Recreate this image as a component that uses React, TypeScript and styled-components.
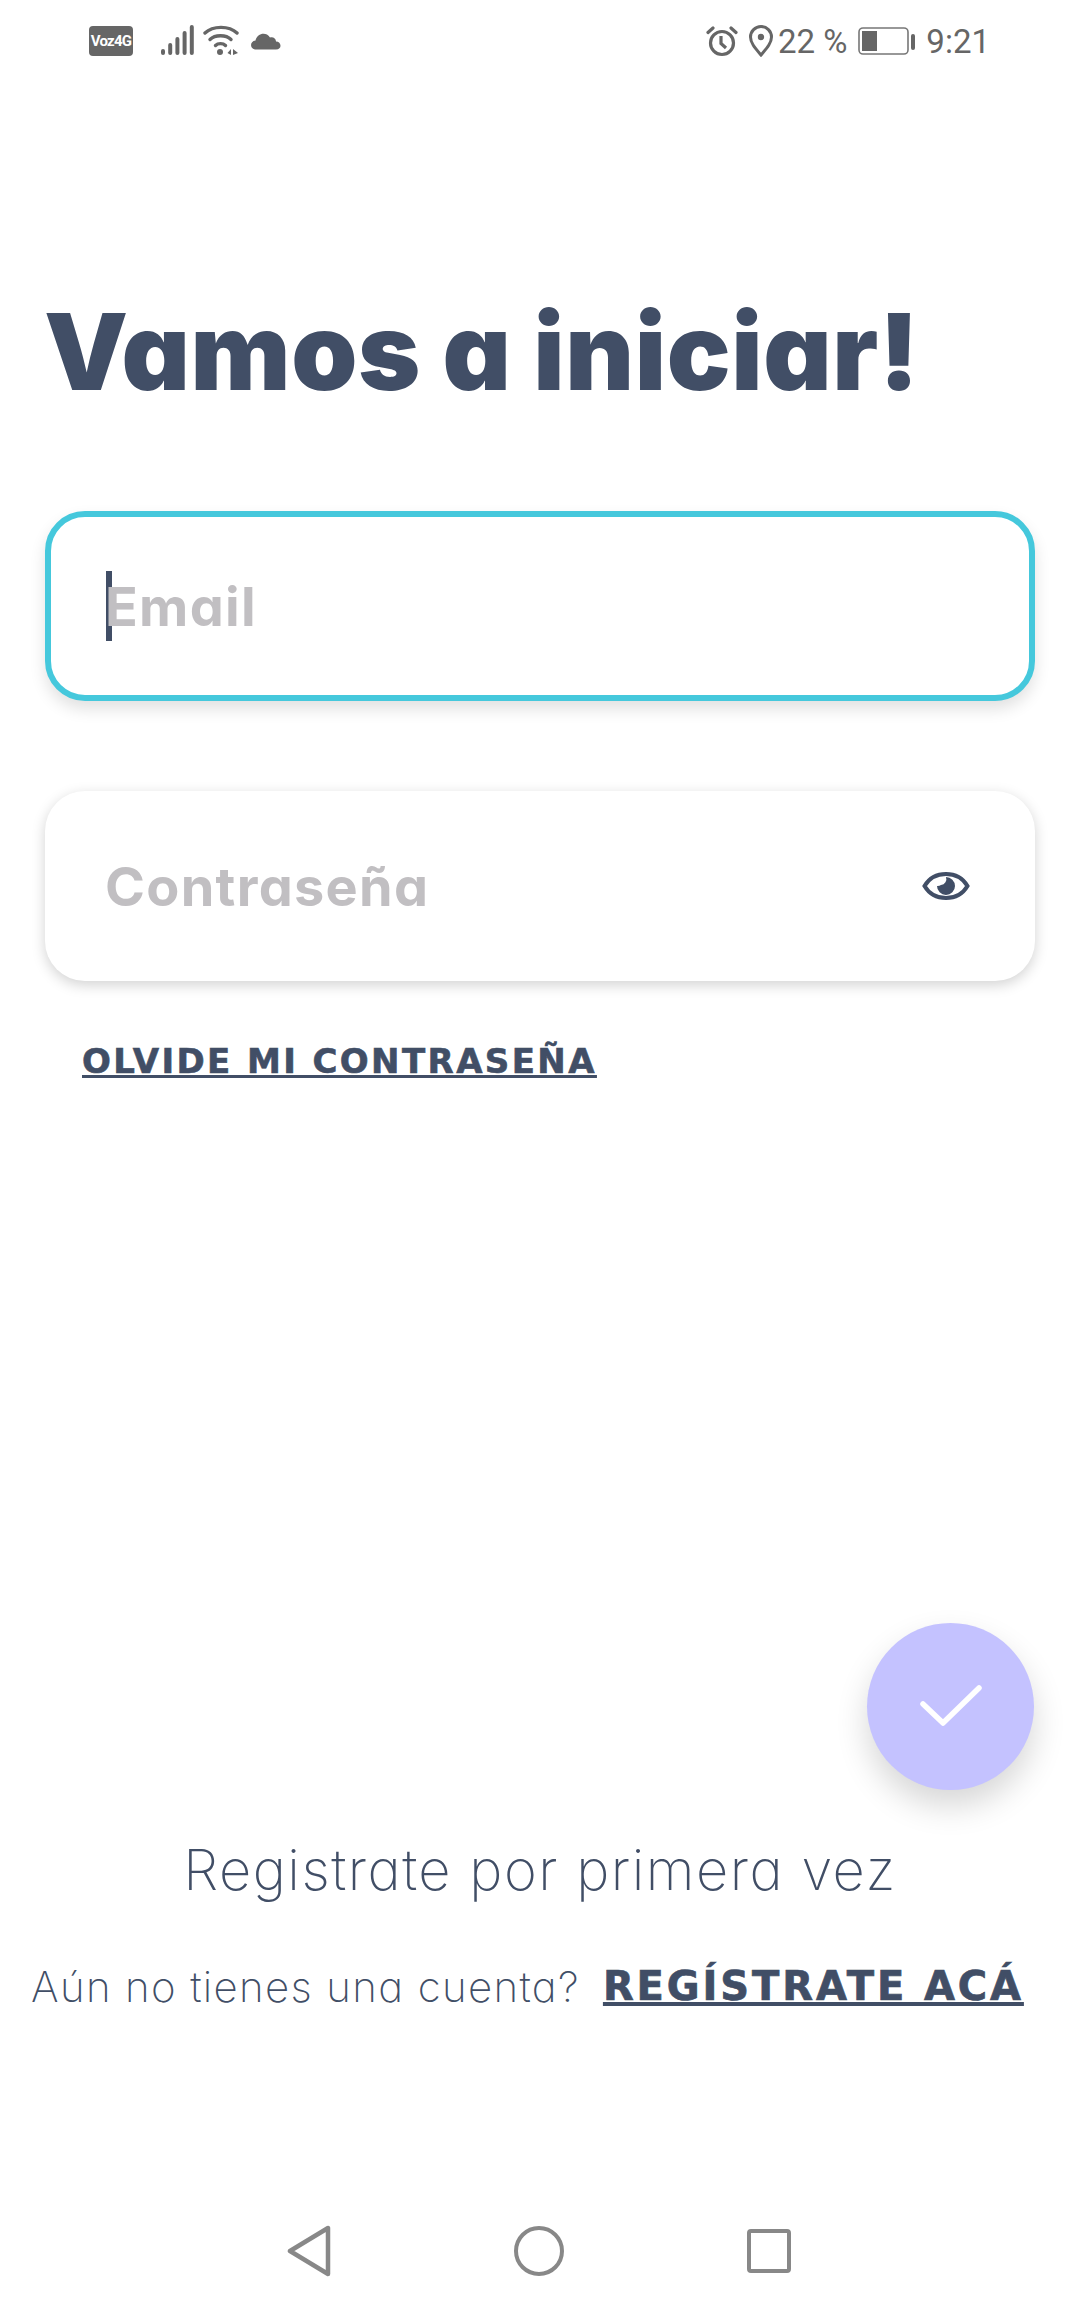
import React from 'react';
import styled, {createGlobalStyle} from "styled-components";

const GlobalStyle = createGlobalStyle`
  html, body {
    margin: 0;
    padding: 0;
    background: #ffffff;
  }
  * {
    box-sizing: border-box;
  }
`

const StatusLeft = () => (
    <StatusGroup>
        <VozBadge>Voz4G</VozBadge>
        <svg width="33" height="32" viewBox="0 0 33 32" style={{marginLeft: 28}}>
            <g fill="#666">
                <rect x="0" y="24" width="4" height="6" rx="2"/>
                <rect x="7.200" y="18" width="4" height="12" rx="2"/>
                <rect x="14.400" y="12" width="4" height="18" rx="2"/>
                <rect x="21.600" y="6" width="4" height="24" rx="2"/>
                <rect x="28.800" y="0" width="4" height="30" rx="2"/>
            </g>
        </svg>
        <svg width="37" height="32" viewBox="0 0 37 32" style={{marginLeft: 9}}>
            <g fill="none" stroke="#666" strokeWidth="3.4" strokeLinecap="round">
                <path d="M2 8 C10 0.500 26 0.500 34 8"/>
                <path d="M7 14.500 C12 9.500 23 9.500 28 14.500"/>
                <path d="M12.500 20.500 C15 18 20 18 22.500 20.500"/>
            </g>
            <circle cx="17" cy="27" r="3" fill="#666"/>
            <path d="M28 24 L28 30 L24.500 28 Z M30 24 L30 30 L35 28 Z" fill="#666"/>
        </svg>
        <svg width="31" height="18" viewBox="0 0 31 18" style={{marginLeft: 10}}>
            <path d="M6 17.500 C0 17.500 -1 9.500 5.500 8.500 C7 2 15.500 -1 20 5.500 C23 4.500 26 6.500 26 9.500 C31.500 9.500 32.500 17.500 26 17.500 Z" fill="#666"/>
        </svg>
    </StatusGroup>
)

const StatusRight = () => (
    <StatusGroup>
        <svg width="32" height="32" viewBox="0 0 32 32">
            <g fill="none" stroke="#666" strokeWidth="3.2">
                <circle cx="16" cy="18" r="11.500"/>
                <path d="M15 11 V18.500 L20 23"/>
                <path d="M2 7.500 L7 3 M30 7.500 L25 3" strokeLinecap="round"/>
            </g>
        </svg>
        <svg width="26" height="32" viewBox="0 0 26 32" style={{marginLeft: 10}}>
            <path d="M13 30 C7 23 2.500 18 2.500 12 A10.500 10.500 0 0 1 23.500 12 C23.500 18 19 23 13 30 Z" fill="none" stroke="#666" strokeWidth="3"/>
            <circle cx="13" cy="12" r="3.200" fill="#666"/>
        </svg>
        <StatusText>22 %</StatusText>
        <svg width="58" height="28" viewBox="0 0 58 28" style={{marginLeft: 11}}>
            <rect x="1" y="1" width="49" height="26" rx="4" fill="none" stroke="#777" strokeWidth="1.600"/>
            <rect x="4" y="4" width="15" height="20" fill="#666"/>
            <rect x="53" y="7" width="4" height="16" rx="2" fill="#666"/>
        </svg>
        <TimeText>9:21</TimeText>
    </StatusGroup>
)

const EyeIcon = () => (
    <svg width="48" height="32" viewBox="0 0 48 32">
        <path d="M2.500 16 C12 0 36 0 45.500 16 C36 32 12 32 2.500 16 Z" fill="none" stroke="#414e66" strokeWidth="4"/>
        <path d="M24 7 A9 9 0 1 1 15 16 A6 6 0 0 0 19 15 A6 6 0 0 0 24 7 Z" fill="#414e66"/>
    </svg>
)

const CheckIcon = () => (
    <svg width="64" height="46" viewBox="0 0 64 46">
        <path d="M4 20 L24 39 L60 4" fill="none" stroke="#ffffff" strokeWidth="5.500" strokeLinecap="round" strokeLinejoin="round"/>
    </svg>
)

const App = () => {
    return (
        <Page>
            <GlobalStyle/>
            <StatusBar>
                <StatusLeft/>
                <StatusRight/>
            </StatusBar>

            <Title>Vamos a iniciar!</Title>

            <FocusField>
                <Caret/>
                <Placeholder>Email</Placeholder>
            </FocusField>

            <PasswordField>
                <Placeholder>Contraseña</Placeholder>
                <EyeIcon/>
            </PasswordField>

            <ForgotLink>OLVIDE MI CONTRASEÑA</ForgotLink>

            <Fab>
                <CheckIcon/>
            </Fab>

            <RegisterTitle>Registrate por primera vez</RegisterTitle>

            <RegisterRow>
                <RegisterText>Aún no tienes una cuenta?</RegisterText>
                <RegisterLink>REGÍSTRATE ACÁ</RegisterLink>
            </RegisterRow>

            <NavBar>
                <svg width="44" height="52" viewBox="0 0 44 52">
                    <path d="M41 3 V49 L3 26 Z" fill="none" stroke="#888" strokeWidth="4.500" strokeLinejoin="round"/>
                </svg>
                <NavCircle/>
                <NavSquare/>
            </NavBar>
        </Page>
    );
};

export default App;

const Page = styled.div`
  width: 1080px;
  height: 2312px;
  display: flex;
  flex-direction: column;
  background: #ffffff;
  font-family: "Inter", "Liberation Sans", sans-serif;
  font-feature-settings: "cv11" 1;
  color: #414e66;
  overflow: hidden;
`

const StatusBar = styled.div`
  height: 80px;
  padding: 24px 90px 0 89px;
  display: flex;
  justify-content: space-between;
  align-items: flex-start;
`

const StatusGroup = styled.div`
  display: flex;
  align-items: center;
  height: 34px;
`

const VozBadge = styled.span`
  width: 44px;
  height: 30px;
  border-radius: 4px;
  background: #666;
  color: #fff;
  font-family: "Roboto", sans-serif;
  font-size: 15px;
  font-weight: 700;
  letter-spacing: -0.8px;
  display: flex;
  align-items: center;
  justify-content: center;
`

const StatusText = styled.span`
  margin-left: 4px;
  font-family: "Roboto", sans-serif;
  font-size: 33px;
  color: #666;
`

const TimeText = styled(StatusText)`
  margin-left: 10px;
`

const Title = styled.h1`
  margin: 212px 0 0 44px;
  font-size: 106px;
  line-height: 120px;
  font-weight: 900;
  letter-spacing: 0.600px;
  white-space: nowrap;
`

const Field = styled.div`
  width: 990px;
  height: 190px;
  margin-left: 45px;
  border-radius: 40px;
  background: #ffffff;
  display: flex;
  align-items: center;
`

const FocusField = styled(Field)`
  margin-top: 99px;
  padding-left: 55px;
  border: 6px solid #45c8dc;
  box-shadow: 0 8px 16px rgba(0, 0, 0, 0.12);
`

const PasswordField = styled(Field)`
  margin-top: 90px;
  padding: 0 65px 0 60px;
  justify-content: space-between;
  box-shadow: 0 4px 14px rgba(0, 0, 0, 0.18);
`

const Caret = styled.span`
  width: 6px;
  height: 70px;
  margin-right: -7px;
  background: #414e66;
`

const Placeholder = styled.span`
  font-size: 54px;
  font-weight: 700;
  letter-spacing: 1.300px;
  color: #c1bfc2;
`

const ForgotLink = styled.a`
  margin: 58px 0 0 82px;
  font-family: "DejaVu Sans", "Inter", sans-serif;
  font-size: 34px;
  line-height: 44px;
  font-weight: 700;
  letter-spacing: 2.400px;
  -webkit-text-stroke: 0.6px #414e66;
  text-decoration: underline;
  align-self: flex-start;
`

const Fab = styled.div`
  width: 167px;
  height: 167px;
  margin: 540px 0 0 867px;
  border-radius: 50%;
  background: #c4c2ff;
  box-shadow: 0 16px 32px rgba(0, 0, 0, 0.16);
  display: flex;
  align-items: center;
  justify-content: center;
`

const RegisterTitle = styled.div`
  margin-top: 45px;
  text-align: center;
  font-size: 56px;
  line-height: 70px;
  font-weight: 250;
  letter-spacing: 1.500px;
`

const RegisterRow = styled.div`
  margin: 46px 0 0 31px;
  display: flex;
  align-items: center;
  gap: 23px;
  height: 70px;
`

const RegisterText = styled.span`
  font-size: 42px;
  font-weight: 250;
  letter-spacing: 1.350px;
`

const RegisterLink = styled.a`
  font-family: "DejaVu Sans", "Inter", sans-serif;
  font-size: 40px;
  font-weight: 700;
  letter-spacing: 2.900px;
  -webkit-text-stroke: 0.7px #414e66;
  text-decoration: underline;
`

const NavBar = styled.div`
  margin-top: auto;
  height: 84px;
  padding: 0 289px 39px 287px;
  display: flex;
  justify-content: space-between;
  align-items: center;
`

const NavCircle = styled.span`
  width: 50px;
  height: 50px;
  border: 4.500px solid #888;
  border-radius: 50%;
`

const NavSquare = styled.span`
  width: 44px;
  height: 44px;
  border: 4.500px solid #888;
  border-radius: 4px;
`
